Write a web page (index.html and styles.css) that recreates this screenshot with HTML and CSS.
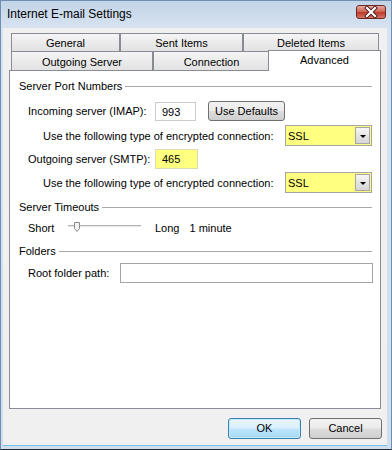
FILE: index.html
```html
<!DOCTYPE html>
<html lang="en">

<head>
    <meta charset="UTF-8">
    <title>Internet E-mail Settings</title>
    <link rel="stylesheet" href="styles.css">
</head>

<body>
    <div class="window">
        <!-- Title bar -->
        <div class="titlebar">
            <span class="title">Internet E-mail Settings</span>
            <div class="close-btn">
                <svg width="28" height="12" viewBox="0 0 28 12">
                    <path d="M10 2 L18 10 M18 2 L10 10" stroke="#4a1c18" stroke-width="4" stroke-linecap="square" />
                    <path d="M10 2 L18 10 M18 2 L10 10" stroke="#ffffff" stroke-width="2.2" stroke-linecap="square" />
                </svg>
            </div>
        </div>

        <div class="client">
            <!-- Tabs -->
            <div class="tab-row back">
                <div class="tab t-general">General</div>
                <div class="tab t-sent">Sent Items</div>
                <div class="tab t-deleted">Deleted Items</div>
            </div>
            <div class="tab-row front">
                <div class="tab t-outgoing">Outgoing Server</div>
                <div class="tab t-connection">Connection</div>
                <div class="tab t-advanced selected">Advanced</div>
            </div>

            <!-- Advanced page -->
            <div class="panel">
                <div class="group-head first"><span>Server Port Numbers</span><span class="rule"></span></div>

                <div class="row port-row">
                    <span class="port-label">Incoming server (IMAP):</span>
                    <div class="field port imap">993</div>
                    <div class="btn defaults">Use Defaults</div>
                </div>
                <div class="row enc-row first-enc">
                    <span>Use the following type of encrypted connection:</span>
                    <div class="combo"><span>SSL</span><span class="drop"></span></div>
                </div>
                <div class="row port-row smtp-row">
                    <span class="port-label">Outgoing server (SMTP):</span>
                    <div class="field port smtp highlight">465</div>
                </div>
                <div class="row enc-row">
                    <span>Use the following type of encrypted connection:</span>
                    <div class="combo"><span>SSL</span><span class="drop"></span></div>
                </div>

                <div class="group-head timeouts"><span>Server Timeouts</span><span class="rule"></span></div>
                <div class="row slider-row">
                    <span class="short">Short</span>
                    <div class="slider">
                        <svg width="74" height="16" viewBox="0 0 74 16">
                            <line x1="0" y1="5.5" x2="73" y2="5.5" stroke="#b4b4b4" stroke-width="1" />
                            <line x1="0" y1="6.5" x2="73" y2="6.5" stroke="#e6e6e6" stroke-width="1" />
                            <path d="M6.5 2.5 H11.5 V8.5 L9 11.5 L6.5 8.5 Z" fill="#f4f4f4" stroke="#8a8a8a" stroke-width="1" />
                        </svg>
                    </div>
                    <span class="long">Long</span>
                    <span>1 minute</span>
                </div>

                <div class="group-head folders"><span>Folders</span><span class="rule"></span></div>
                <div class="row root-row">
                    <span class="root-label">Root folder path:</span>
                    <div class="field root"></div>
                </div>
            </div>

            <!-- Dialog buttons -->
            <div class="actions">
                <div class="btn dialog-btn default">OK</div>
                <div class="btn dialog-btn">Cancel</div>
            </div>
        </div>
    </div>
</body>

</html>
```

FILE: styles.css
```css
body {
    margin: 0;
    font-family: "Liberation Sans", Arial, sans-serif;
    font-size: 11px;
    color: #000;
}

.window {
    width: 392px;
    height: 450px;
    box-sizing: border-box;
    border: 1px solid #6f8fb2;
    border-bottom-color: #1d2a36;
    background: linear-gradient(#c3d5e9, #d7e3f0 28px, #cfdeed);
    display: flex;
    flex-direction: column;
}

.titlebar {
    height: 27px;
    display: flex;
    align-items: flex-start;
    padding-left: 6px;
    flex-shrink: 0;
}

.title {
    font-size: 12px;
    line-height: 27px;
}

.close-btn {
    margin: 4px 5px 0 auto;
    width: 30px;
    height: 14px;
    box-sizing: border-box;
    border: 1px solid #6e2a22;
    border-radius: 3px;
    background: linear-gradient(#e7a99f, #d0685a 45%, #bd3c2d 55%, #d57565);
    display: flex;
    align-items: center;
    justify-content: center;
}

.client {
    margin: 0 4px 3px 2px;
    height: 418px;
    background: #f0f0f0;
    padding-top: 5px;
    box-sizing: border-box;
    border-bottom: 1px solid #6fc3e6;
}

/* Tabs */
.tab-row {
    display: flex;
    padding: 0 8px;
}

.tab-row.back {
    height: 18px;
}

.tab-row.front {
    height: 19px;
}

.tab {
    box-sizing: border-box;
    border: 1px solid #898c95;
    border-bottom: none;
    background: linear-gradient(#f5f5f5, #ebebeb 50%, #e2e2e2);
    text-align: center;
    line-height: 18px;
}

.back .tab {
    padding-top: 1px;
    line-height: 17px;
}

.front .tab {
    padding-top: 2px;
    line-height: 17px;
}

.t-general { width: 109px; }
.t-sent { width: 123px; }
.t-deleted { width: 136px; }
.t-outgoing { width: 142px; }
.t-connection { width: 117px; }

.tab.selected {
    width: 113px;
    margin: -1px -2px 0 -2px;
    height: 21px;
    background: #fff;
    position: relative;
    z-index: 1;
    padding-top: 1px;
}

.panel {
    margin: 0 6px 0 6px;
    height: 339px;
    box-sizing: border-box;
    border: 1px solid #898c95;
    background: #fff;
    padding: 0 8px 0 9px;
}

.group-head {
    display: flex;
    align-items: center;
    gap: 3px;
    height: 14px;
    line-height: 14px;
}

.group-head .rule {
    flex: 1;
    border-top: 1px solid #a9a9a9;
}

.group-head.first { margin-top: 8px; }
.group-head.timeouts { margin-top: 7px; }
.group-head.folders { margin-top: 8px; }

.row {
    display: flex;
    align-items: center;
}

.port-row {
    margin-top: 8px;
    height: 20px;
    padding-left: 9px;
}

.smtp-row {
    margin-top: 3px;
}

.port-label {
    width: 127px;
}

.field {
    box-sizing: border-box;
    height: 20px;
    border: 1px solid #c9cbd0;
    background: #fff;
    line-height: 18px;
    padding-left: 6px;
}

.field.highlight {
    background: #ffff80;
    border-color: #dcdcb0;
}

.port.imap {
    width: 41px;
    height: 19px;
}

.port.smtp {
    width: 43px;
}

.btn {
    box-sizing: border-box;
    border: 1px solid #707070;
    border-radius: 3px;
    background: linear-gradient(#f2f2f2, #ebebeb 48%, #dddddd 52%, #cfcfcf);
    text-align: center;
}

.defaults {
    margin-left: 12px;
    width: 77px;
    height: 20px;
    line-height: 18px;
}

.enc-row {
    margin-top: 3px;
    height: 21px;
    padding-left: 24px;
}

.enc-row.first-enc {
    margin-top: 4px;
}

.combo {
    margin-left: auto;
    width: 87px;
    height: 21px;
    box-sizing: border-box;
    border: 1px solid #a5a5a5;
    background: #ffff80;
    display: flex;
    align-items: center;
    padding: 0 1px 0 2px;
}

.combo span:first-child {
    flex: 1;
}

.drop {
    width: 15px;
    height: 17px;
    box-sizing: border-box;
    border: 1px solid #a6a6a6;
    background: linear-gradient(#f6f6f6, #e4e4e4 50%, #d6d6d6);
    position: relative;
}

.drop::after {
    content: "";
    position: absolute;
    left: 4px;
    top: 7px;
    border-left: 3px solid transparent;
    border-right: 3px solid transparent;
    border-top: 3px solid #000;
}

.slider-row {
    margin-top: 6px;
    height: 16px;
    padding-left: 9px;
}

.short {
    width: 40px;
}

.slider {
    height: 16px;
}

.slider svg {
    display: block;
}

.long {
    margin-left: 13px;
    margin-right: 10px;
}

.root-row {
    margin-top: 5px;
    height: 20px;
    padding-left: 9px;
}

.root-label {
    width: 92px;
}

.field.root {
    flex: 1;
    border-color: #a5a5a5;
    margin-right: -1px;
}

.actions {
    display: flex;
    justify-content: flex-end;
    gap: 8px;
    margin: 9px 5px 0 0;
}

.dialog-btn {
    width: 73px;
    height: 21px;
    line-height: 19px;
}

.dialog-btn.default {
    border-color: #3c7fb1;
    background: linear-gradient(#eaf6fd, #d9f0fc 48%, #bee6fd 52%, #a7d9f5);
    box-shadow: inset 0 0 0 1px #c3eafd;
}
```
